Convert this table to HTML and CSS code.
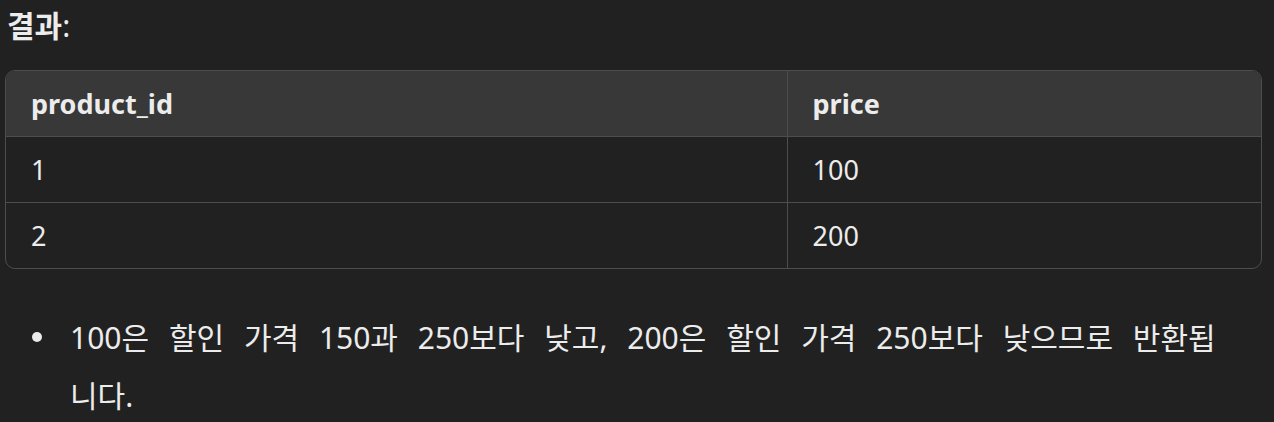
FILE: index.html
```html
<!DOCTYPE html>
<html lang="ko">
<head>
<meta charset="utf-8">
<link rel="stylesheet" href="styles.css">
</head>
<body>
<div class="page">
  <p class="title"><strong>결과</strong>:</p>
  <div class="table-wrap">
    <table class="result">
      <thead>
        <tr><th class="c1">product_id</th><th class="c2">price</th></tr>
      </thead>
      <tbody>
        <tr><td>1</td><td>100</td></tr>
        <tr><td>2</td><td>200</td></tr>
      </tbody>
    </table>
  </div>
  <ul class="notes">
    <li>100은 할인 가격 150과 250보다 낮고, 200은 할인 가격 250보다 낮으므로 반환됩니다.</li>
  </ul>
</div>
</body>
</html>
```
FILE: styles.css
```css
html, body {
  margin: 0;
  padding: 0;
  background: #212121;
}
body {
  color: #ececec;
  font-family: "Noto Sans", "Noto Sans CJK KR", sans-serif;
}
.page {
  width: 1274px;
  padding: 0 12px 0 5px;
  box-sizing: border-box;
}
.title {
  margin: 0;
  padding-top: 5px;
  padding-left: 2px;
  font-size: 30px;
  line-height: 42px;
}
.title strong {
  font-weight: 700;
}
.table-wrap {
  margin-top: 23px;
  border: 1px solid #4d4d4d;
  border-radius: 10px;
  overflow: hidden;
}
.result {
  width: 100%;
  border-collapse: collapse;
  font-size: 27px;
}
.result th, .result td {
  text-align: left;
  padding: 0 25px;
  box-sizing: border-box;
}
.result th {
  height: 65px;
  background: #383838;
  font-weight: 700;
}
.result td {
  height: 66px;
}
.result tbody td {
  border-top: 1px solid #4d4d4d;
}
.result th + th, .result td + td {
  border-left: 1px solid #4d4d4d;
}
.result .c1 {
  width: 781px;
}
.notes {
  list-style: none;
  margin: 40px 0 0 0;
  padding: 0 25px 0 65px;
  font-size: 30px;
  line-height: 58px;
  word-spacing: 12px;
}
.notes li {
  position: relative;
}
.notes li::before {
  content: "";
  position: absolute;
  left: -38px;
  top: 23px;
  width: 10px;
  height: 10px;
  border-radius: 50%;
  background: #ececec;
}
```
